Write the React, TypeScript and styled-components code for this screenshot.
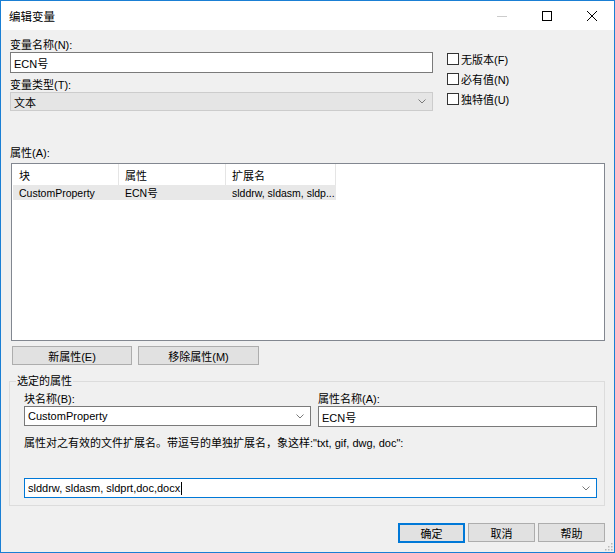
import React from 'react'
import styled, { createGlobalStyle } from 'styled-components'

const GlobalStyle = createGlobalStyle`
  html, body {
    margin: 0;
    padding: 0;
    background: #ffffff;
  }
  * {
    box-sizing: border-box;
  }
`

const Window = styled.div`
  position: relative;
  width: 615px;
  height: 553px;
  border: 1px solid #1a7fd4;
  background: #f0f0f0;
  font-family: 'Liberation Sans', 'Noto Sans CJK SC', sans-serif;
  font-size: 11px;
  color: #000000;
  display: flex;
  flex-direction: column;
`

const TitleBar = styled.div`
  height: 29px;
  background: #ffffff;
  display: flex;
  align-items: center;
  padding-left: 8px;
`

const TitleText = styled.div`
  flex: 1;
  font-family: 'Noto Sans CJK SC', sans-serif;
  font-size: 11.5px;
  padding-top: 1px;
`

const TitleButton = styled.div`
  width: 45px;
  height: 29px;
  display: flex;
  align-items: center;
  justify-content: center;
`

const Body = styled.div`
  flex: 1;
  display: flex;
  flex-direction: column;
  padding: 0 9px 0 9px;
`

const TopSection = styled.div`
  display: grid;
  grid-template-columns: 423px 1fr;
  column-gap: 14px;
`

const FieldColumn = styled.div`
  display: flex;
  flex-direction: column;
`

const Label = styled.div<{ $gap?: number }>`
  height: ${({ $gap }) => 14 + ($gap ?? 0)}px;
  line-height: 14px;
  padding-top: ${({ $gap }) => $gap ?? 0}px;
  white-space: nowrap;
`

const TextBox = styled.div`
  height: 21px;
  background: #ffffff;
  border: 1px solid #7a7a7a;
  display: flex;
  align-items: center;
  padding-left: 3px;
  white-space: nowrap;
`

const Combo = styled.div<{ $disabled?: boolean; $focused?: boolean; $h?: number }>`
  height: ${({ $h }) => $h ?? 20}px;
  background: ${({ $disabled }) => ($disabled ? '#e5e5e5' : '#ffffff')};
  border: 1px solid
    ${({ $disabled, $focused }) => ($focused ? '#0078d7' : $disabled ? '#cccccc' : '#7a7a7a')};
  display: flex;
  align-items: center;
  padding-left: 3px;
  padding-right: 6px;
  white-space: nowrap;
`

const ComboValue = styled.div`
  flex: 1;
  display: flex;
  align-items: center;
`

const Caret = styled.span`
  display: inline-block;
  width: 1px;
  height: 13px;
  background: #000000;
  margin-left: 1px;
`

const CheckColumn = styled.div`
  display: flex;
  flex-direction: column;
  gap: 6px;
  padding-top: 22px;
`

const CheckRow = styled.div`
  height: 14px;
  display: flex;
  align-items: center;
  gap: 2px;
  white-space: nowrap;
`

const CheckBox = styled.span`
  width: 12px;
  height: 12px;
  border: 1px solid #333333;
  background: #ffffff;
`

const ListLabel = styled(Label)`
  margin-top: 35px;
`

const ListView = styled.div`
  margin-top: 3px;
  margin-left: 1px;
  height: 178px;
  background: #ffffff;
  border: 1px solid #828790;
  padding: 0 0 0 1px;
`

const ListRow = styled.div<{ $header?: boolean }>`
  display: grid;
  grid-template-columns: 106px 107px 110px;
  height: ${({ $header }) => ($header ? 21 : 15)}px;
  background: ${({ $header }) => ($header ? '#ffffff' : '#e8e8e8')};
  width: 323px;
`

const ListCell = styled.div<{ $header?: boolean }>`
  display: flex;
  align-items: center;
  padding-left: 6px;
  border-right: ${({ $header }) => ($header ? '1px solid #e5e5e5' : 'none')};
  font-size: ${({ $header }) => ($header ? 11 : 10.5)}px;
  white-space: nowrap;
  overflow: hidden;
`

const ButtonRow = styled.div`
  display: flex;
  gap: 6px;
  margin-top: 5px;
  padding-left: 2px;
`

const Button = styled.div<{ $w: number; $default?: boolean }>`
  width: ${({ $w }) => $w}px;
  height: ${({ $default }) => ($default ? 20 : 19)}px;
  background: #e1e1e1;
  border: ${({ $default }) => ($default ? '2px solid #0078d7' : '1px solid #adadad')};
  display: flex;
  align-items: center;
  justify-content: center;
  white-space: nowrap;
`

const Group = styled.fieldset`
  margin: 9px 0 0 -1px;
  padding: 4px 7px 7px 14px;
  border: 1px solid #dcdcdc;
  min-width: 0;
`

const Legend = styled.legend`
  padding: 0 1px;
  margin-left: -8px;
  line-height: 14px;
  font-size: 11px;
`

const PairGrid = styled.div`
  display: grid;
  grid-template-columns: 287px 1fr;
  column-gap: 7px;
`

const Hint = styled.div`
  margin-top: 9px;
  line-height: 14px;
  white-space: nowrap;
`

const ExtCombo = styled(Combo)`
  margin-top: 28px;
`

const Footer = styled.div`
  display: flex;
  justify-content: flex-end;
  gap: 3px;
  margin-top: 17px;
`

const Grip = styled.svg`
  position: absolute;
  right: 1px;
  bottom: 1px;
`

const Chevron = () => (
  <svg width="8" height="5" viewBox="0 0 8 5">
    <polyline points="0.5,0.5 4,4 7.5,0.5" fill="none" stroke="#7a7a7a" strokeWidth="1" />
  </svg>
)

const App = () => {
  return (
    <>
      <GlobalStyle />
      <Window>
        <TitleBar>
          <TitleText>编辑变量</TitleText>
          <TitleButton>
            <svg width="10" height="10" viewBox="0 0 10 10">
              <line x1="0" y1="5.5" x2="10" y2="5.5" stroke="#cccccc" strokeWidth="1" />
            </svg>
          </TitleButton>
          <TitleButton>
            <svg width="10" height="10" viewBox="0 0 10 10">
              <rect x="0.5" y="0.5" width="9" height="9" fill="none" stroke="#000" strokeWidth="1" />
            </svg>
          </TitleButton>
          <TitleButton>
            <svg width="10" height="10" viewBox="0 0 10 10">
              <path d="M0 0 L10 10 M10 0 L0 10" stroke="#000" strokeWidth="1" />
            </svg>
          </TitleButton>
        </TitleBar>
        <Body>
          <TopSection>
            <FieldColumn>
              <Label $gap={8}>变量名称(N):</Label>
              <TextBox>ECN号</TextBox>
              <Label $gap={5}>变量类型(T):</Label>
              <Combo $disabled $h={19}>
                <ComboValue>文本</ComboValue>
                <Chevron />
              </Combo>
            </FieldColumn>
            <CheckColumn>
              <CheckRow>
                <CheckBox />
                无版本(F)
              </CheckRow>
              <CheckRow>
                <CheckBox />
                必有值(N)
              </CheckRow>
              <CheckRow>
                <CheckBox />
                独特值(U)
              </CheckRow>
            </CheckColumn>
          </TopSection>

          <ListLabel>属性(A):</ListLabel>
          <ListView>
            <ListRow $header>
              <ListCell $header>块</ListCell>
              <ListCell $header>属性</ListCell>
              <ListCell $header>扩展名</ListCell>
            </ListRow>
            <ListRow>
              <ListCell>CustomProperty</ListCell>
              <ListCell>ECN号</ListCell>
              <ListCell>slddrw, sldasm, sldp...</ListCell>
            </ListRow>
          </ListView>

          <ButtonRow>
            <Button $w={120}>新属性(E)</Button>
            <Button $w={121}>移除属性(M)</Button>
          </ButtonRow>

          <Group>
            <Legend>选定的属性</Legend>
            <PairGrid>
              <FieldColumn>
                <Label>块名称(B):</Label>
                <Combo>
                  <ComboValue>CustomProperty</ComboValue>
                  <Chevron />
                </Combo>
              </FieldColumn>
              <FieldColumn>
                <Label>属性名称(A):</Label>
                <TextBox>ECN号</TextBox>
              </FieldColumn>
            </PairGrid>
            <Hint>属性对之有效的文件扩展名。带逗号的单独扩展名，象这样:"txt, gif, dwg, doc":</Hint>
            <ExtCombo $focused>
              <ComboValue>
                slddrw, sldasm, sldprt,doc,docx
                <Caret />
              </ComboValue>
              <Chevron />
            </ExtCombo>
          </Group>

          <Footer>
            <Button $w={67} $default>确定</Button>
            <Button $w={67}>取消</Button>
            <Button $w={67}>帮助</Button>
          </Footer>
        </Body>
        <Grip width="10" height="10" viewBox="0 0 10 10">
          {[
            [8, 2],
            [8, 5],
            [5, 5],
            [8, 8],
            [5, 8],
            [2, 8],
          ].map(([x, y]) => (
            <rect key={`${x}-${y}`} x={x} y={y} width="1.5" height="1.5" fill="#b8b8b8" />
          ))}
        </Grip>
      </Window>
    </>
  )
}

export default App
